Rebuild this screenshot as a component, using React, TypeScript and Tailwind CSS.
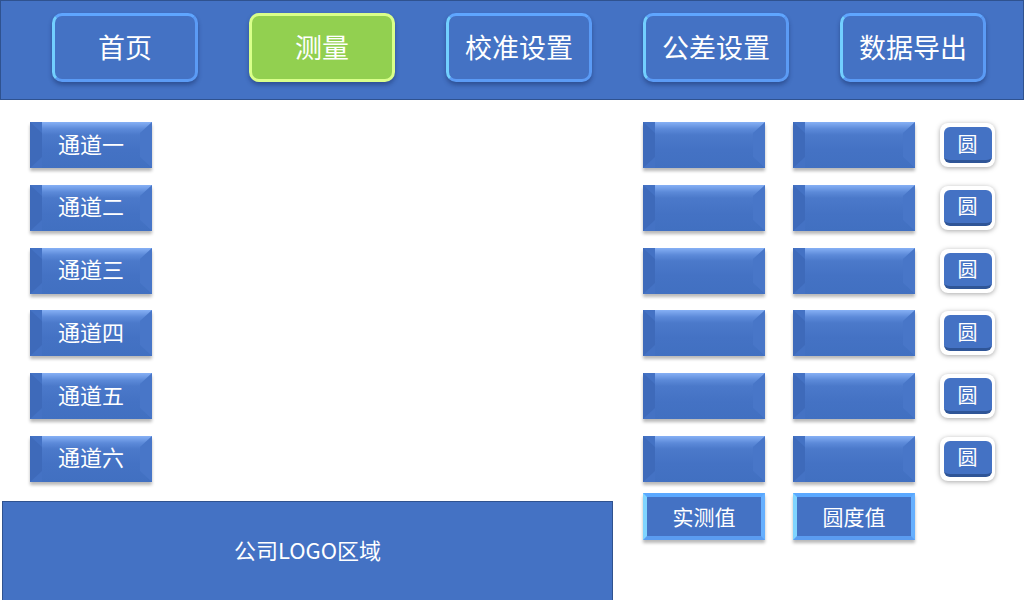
import React from 'react';

const font = { fontFamily: '"Noto Sans CJK SC", "Noto Sans", sans-serif' };

const navItems = [
  { label: '首页', active: false },
  { label: '测量', active: true },
  { label: '校准设置', active: false },
  { label: '公差设置', active: false },
  { label: '数据导出', active: false },
];

const channels = ['通道一', '通道二', '通道三', '通道四', '通道五', '通道六'];

// PowerPoint style bevel button: gradient face + darker side borders
function Bevel({ children }: { children?: React.ReactNode }) {
  return (
    <div className="w-[122px] h-[46px] box-border border-y-[11px] border-x-[12px] border-t-transparent border-b-transparent border-l-[#3e6aba] border-r-[#4876c8] bg-origin-border bg-no-repeat bg-[#4472c4] bg-[linear-gradient(to_bottom,#86b0f5_0px,#5c8ad9_7px,#4b79ca_13px,#4472c4_28px,#4170c1_46px)] shadow-[0_3px_3px_rgba(0,0,0,0.28)] flex items-center justify-center">
      <span className="text-white text-[22px] leading-[24px] whitespace-nowrap mb-[5px]">{children}</span>
    </div>
  );
}

function RoundBtn() {
  return (
    <div className="w-[55px] h-[44px] rounded-[8px] bg-white shadow-[0_1px_5px_rgba(0,0,0,0.35)] flex items-center justify-center">
      <div className="w-[48px] h-[36px] rounded-[6px] bg-[#4472c4] border-b-[3px] border-[#2f5597] flex items-center justify-center">
        <span className="text-white text-[20px] leading-none">圆</span>
      </div>
    </div>
  );
}

function FramedLabel({ text }: { text: string }) {
  return (
    <div className="w-[122px] h-[47px] box-border border-[4px] border-t-[#5aa8ff] border-b-[#5b9cf0] border-l-[#7fd4ff] border-r-[#66b0ff] bg-[#4472c4] shadow-[0_3px_3px_rgba(0,0,0,0.28)] flex items-center justify-center">
      <span className="text-white text-[21px] leading-none">{text}</span>
    </div>
  );
}

export default function App() {
  return (
    <div className="w-[1024px] h-[600px] bg-white overflow-hidden" style={font}>
      {/* 顶部导航 */}
      <header className="h-[100px] box-border border border-[#2f528f] bg-[#4472c4] flex gap-[51px] pl-[51px] pt-[12px]">
        {navItems.map((item) => (
          <div
            key={item.label}
            className={`w-[146px] h-[69px] box-border rounded-[10px] border-[3px] flex items-center justify-center shadow-[0_3px_4px_rgba(20,40,90,0.45)] ${
              item.active
                ? 'bg-[#92d050] border-[#d9ff8a]'
                : 'bg-[#4472c4] border-t-[#5fa6ff] border-b-[#5b9bf5] border-l-[#72cfff] border-r-[#5b9bf5]'
            }`}
          >
            <span className="text-white text-[27px] leading-none mb-[3px]">{item.label}</span>
          </div>
        ))}
      </header>

      <div className="flex pt-[22px]">
        {/* 左侧通道 */}
        <div className="w-[612px] flex flex-col">
          <div className="pl-[30px] flex flex-col gap-[16.8px]">
            {channels.map((c) => (
              <Bevel key={c}>{c}</Bevel>
            ))}
          </div>
          <div className="mt-[19px] ml-[2px] w-[611px] h-[110px] box-border border border-[#2f528f] bg-[#4472c4] flex justify-center pt-[32px]">
            <span className="text-white text-[22px] leading-[30px]">公司LOGO区域</span>
          </div>
        </div>

        {/* 右侧数值 */}
        <div className="pl-[31px] flex flex-col">
          <div className="flex flex-col gap-[16.8px]">
            {channels.map((c) => (
              <div key={c} className="flex items-center">
                <Bevel />
                <div className="ml-[28px]">
                  <Bevel />
                </div>
                <div className="ml-[25px]">
                  <RoundBtn />
                </div>
              </div>
            ))}
          </div>
          <div className="flex mt-[11px] gap-[28px]">
            <FramedLabel text="实测值" />
            <FramedLabel text="圆度值" />
          </div>
        </div>
      </div>
    </div>
  );
}
